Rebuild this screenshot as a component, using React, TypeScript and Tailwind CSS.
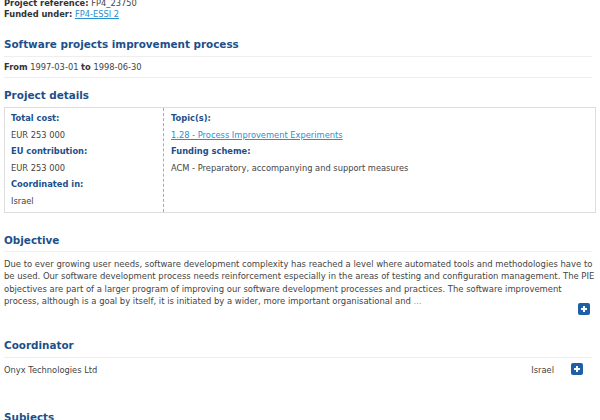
import React from 'react';

const font = { fontFamily: '"DejaVu Sans", Verdana, sans-serif' };

const PlusButton: React.FC = () => (
  <span className="inline-flex h-[12px] w-[12px] items-center justify-center rounded-[2px] bg-[#1f5ea8]">
    <svg width="8" height="8" viewBox="0 0 8 8">
      <path d="M4 1v6M1 4h6" stroke="#fff" strokeWidth="2" />
    </svg>
  </span>
);

const SectionTitle: React.FC<{ children: React.ReactNode }> = ({ children }) => (
  <h2 className="text-[10.4px] font-bold leading-[14px] text-[#1c4f8a]">{children}</h2>
);

const objectiveLines = [
  'Due to ever growing user needs, software development complexity has reached a level where automated tools and methodologies have to',
  'be used. Our software development process needs reinforcement especially in the areas of testing and configuration management. The PIE',
  'objectives are part of a larger program of improving our software development processes and practices. The software improvement',
  'process, although is a goal by itself, it is initiated by a wider, more important organisational and',
];

export default function App() {
  return (
    <div className="h-[420px] w-[600px] overflow-hidden bg-white px-[4px] text-[8.3px] text-[#444]" style={font}>
      {/* Reference */}
      <div className="-mt-[2px] leading-[11px]">
        <div>
          <span className="font-bold text-[#333]">Project reference:</span> FP4_23750
        </div>
        <div>
          <span className="font-bold text-[#333]">Funded under:</span>{' '}
          <a className="text-[#2a8fd0] underline">FP4-ESSI 2</a>
        </div>
      </div>

      {/* Title + dates */}
      <div className="mt-[17px] mr-[4px]">
        <SectionTitle>Software projects improvement process</SectionTitle>
        <div className="mt-[5px] border-t border-[#eee] py-[4px] leading-[12px]">
          <span className="font-bold text-[#333]">From</span> 1997-03-01{' '}
          <span className="font-bold text-[#333]">to</span> 1998-06-30
        </div>
        <div className="border-t border-[#eee]" />
      </div>

      {/* Project details */}
      <div className="mt-[10px]">
        <SectionTitle>Project details</SectionTitle>
        <div className="mt-[5px] flex h-[106px] w-[592px] border border-[#ddd]">
          <div className="w-[159px] border-r border-dashed border-[#aaa] px-[6px] pt-[2px] leading-[16.6px]">
            <div className="font-bold text-[#1c4f8a]">Total cost:</div>
            <div>EUR 253 000</div>
            <div className="font-bold text-[#1c4f8a]">EU contribution:</div>
            <div>EUR 253 000</div>
            <div className="font-bold text-[#1c4f8a]">Coordinated in:</div>
            <div>Israel</div>
          </div>
          <div className="flex-1 px-[7px] pt-[2px] leading-[16.6px]">
            <div className="font-bold text-[#1c4f8a]">Topic(s):</div>
            <div>
              <a className="text-[#2a8fd0] underline">1.28 - Process Improvement Experiments</a>
            </div>
            <div className="font-bold text-[#1c4f8a]">Funding scheme:</div>
            <div>ACM - Preparatory, accompanying and support measures</div>
          </div>
        </div>
      </div>

      {/* Objective */}
      <div className="mt-[20px]">
        <SectionTitle>Objective</SectionTitle>
        <div className="mt-[4px] mr-[4px] border-t border-[#f0f0f0]" />
        <div className="pt-[6px] text-[8.45px] leading-[12.3px]">
          {objectiveLines.map((line, i) => (
            <div key={i} className="whitespace-nowrap">
              {line}
              {i === objectiveLines.length - 1 && <span className="text-[#999]"> ...</span>}
            </div>
          ))}
        </div>
        <div className="-mt-[4px] flex justify-end pr-[6px]">
          <PlusButton />
        </div>
      </div>

      {/* Coordinator */}
      <div className="mt-[23px] mr-[4px]">
        <SectionTitle>Coordinator</SectionTitle>
        <div className="mt-[5px] flex items-center border-t border-[#eee] pt-[5px]">
          <span className="flex-1">Onyx Technologies Ltd</span>
          <span className="mr-[17px]">Israel</span>
          <span className="mr-[9px]">
            <PlusButton />
          </span>
        </div>
      </div>

      {/* Subjects */}
      <div className="mt-[33px]">
        <SectionTitle>Subjects</SectionTitle>
      </div>
    </div>
  );
}
